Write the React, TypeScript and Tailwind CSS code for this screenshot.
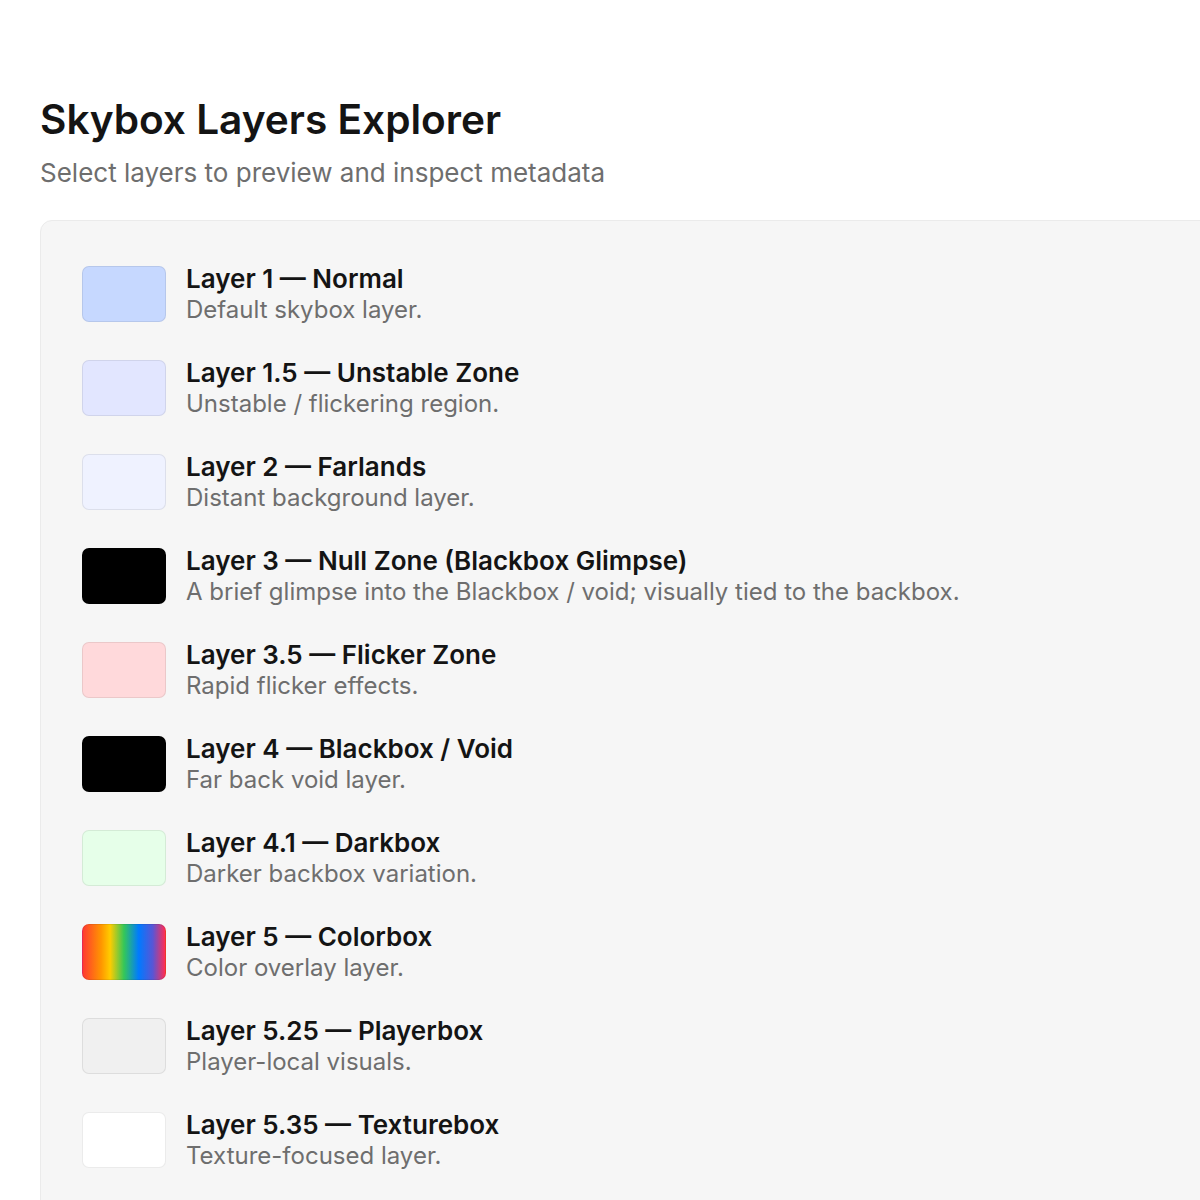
import React from "react";

type Layer = {
  id: string;
  title: string;
  desc: string;
  swatch: string;
};

const layers: Layer[] = [
  { id: "1", title: "Layer 1 — Normal", desc: "Default skybox layer.", swatch: "bg-[#c6d8ff]" },
  { id: "1.5", title: "Layer 1.5 — Unstable Zone", desc: "Unstable / flickering region.", swatch: "bg-[#e2e6ff]" },
  { id: "2", title: "Layer 2 — Farlands", desc: "Distant background layer.", swatch: "bg-[#eff2ff]" },
  {
    id: "3",
    title: "Layer 3 — Null Zone (Blackbox Glimpse)",
    desc: "A brief glimpse into the Blackbox / void; visually tied to the backbox.",
    swatch: "bg-black",
  },
  { id: "3.5", title: "Layer 3.5 — Flicker Zone", desc: "Rapid flicker effects.", swatch: "bg-[#ffd9db]" },
  { id: "4", title: "Layer 4 — Blackbox / Void", desc: "Far back void layer.", swatch: "bg-black" },
  { id: "4.1", title: "Layer 4.1 — Darkbox", desc: "Darker backbox variation.", swatch: "bg-[#e6ffe9]" },
  {
    id: "5",
    title: "Layer 5 — Colorbox",
    desc: "Color overlay layer.",
    swatch:
      "bg-[linear-gradient(90deg,#ff3b30_0%,#ff9500_22%,#ffcc00_33%,#34c759_50%,#007aff_68%,#5856d6_85%,#ff2d55_100%)]",
  },
  { id: "5.25", title: "Layer 5.25 — Playerbox", desc: "Player-local visuals.", swatch: "bg-[#f0f0f0]" },
  { id: "5.35", title: "Layer 5.35 — Texturebox", desc: "Texture-focused layer.", swatch: "bg-white" },
];

function LayerRow({ layer }: { layer: Layer }) {
  return (
    <div className="flex items-center gap-[20px]">
      <div
        className={`h-[56px] w-[84px] shrink-0 rounded-[7px] border border-black/[0.08] ${layer.swatch}`}
      />
      <div className="flex flex-col">
        <div className="text-[26px] leading-[32px] font-semibold text-[#141414]">{layer.title}</div>
        <div className="text-[24px] leading-[30px] text-[#6e6e6e]">{layer.desc}</div>
      </div>
    </div>
  );
}

export default function App() {
  return (
    <div
      className="h-[1200px] w-full overflow-hidden bg-white"
      style={{ fontFamily: "Inter, 'Noto Sans', sans-serif" }}
    >
      <div className="pl-[40px] pt-[95px]">
        <h1 className="text-[40.6px] leading-[50px] font-semibold text-[#141414]">
          Skybox Layers Explorer
        </h1>
        <p className="mt-[10px] text-[26px] leading-[36px] text-[#6e6e6e]">
          Select layers to preview and inspect metadata
        </p>
        <div className="mt-[29px] w-[1240px] rounded-[12px] border border-[#ebebeb] bg-[#f6f6f6] pl-[41px] pt-[42px] pb-[40px]">
          <div className="flex flex-col gap-[32px]">
            {layers.map((l) => (
              <LayerRow key={l.id} layer={l} />
            ))}
          </div>
        </div>
      </div>
    </div>
  );
}
